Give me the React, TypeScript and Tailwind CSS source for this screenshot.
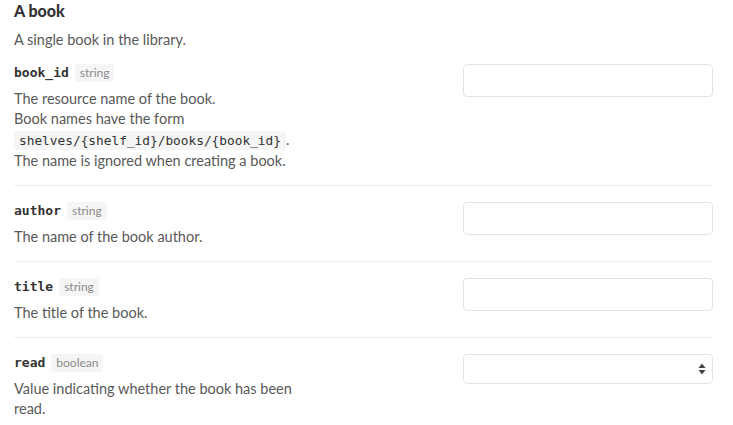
import React from "react";

type Field = {
  name: string;
  type: string;
  lines: React.ReactNode[];
  select?: boolean;
};

const fields: Field[] = [
  {
    name: "book_id",
    type: "string",
    lines: [
      "The resource name of the book.",
      "Book names have the form",
      <span key="code">
        <code className="rounded-[3px] bg-[#f5f5f5] px-[5px] py-[2px] font-['DejaVu_Sans_Mono',monospace] text-[12.8px] text-[#333]">
          {"shelves/{shelf_id}/books/{book_id}"}
        </code>
        .
      </span>,
      "The name is ignored when creating a book.",
    ],
  },
  { name: "author", type: "string", lines: ["The name of the book author."] },
  { name: "title", type: "string", lines: ["The title of the book."] },
  {
    name: "read",
    type: "boolean",
    lines: ["Value indicating whether the book has been read."],
    select: true,
  },
];

const SelectArrows = () => (
  <svg width="8" height="12" viewBox="0 0 8 12" className="text-[#444]">
    <path d="M4 0.5 L7.5 5 H0.5 Z" fill="currentColor" />
    <path d="M4 11.5 L7.5 7 H0.5 Z" fill="currentColor" />
  </svg>
);

const FieldRow = ({ field, first, last }: { field: Field; first: boolean; last: boolean }) => (
  <div
    className={`flex justify-between ${first ? "pt-[14px]" : "pt-4"} ${
      last ? "pb-2" : "pb-[14px] border-b border-[#ededed]"
    }`}
  >
    <div className="flex flex-col">
      <div className="flex h-[18px] items-center gap-[6px]">
        <span className="font-['DejaVu_Sans_Mono',monospace] text-[13px] font-bold text-[#333]">{field.name}</span>
        <span className="rounded-[3px] bg-[#f5f5f5] px-[5px] text-[12px] leading-[18px] text-[#8a8a8a]">
          {field.type}
        </span>
      </div>
      <div className="mt-[7px] w-[300px] text-[14.5px] leading-[20px] text-[#595959]">
        {field.lines.map((l, i) => (
          <div key={i} className={typeof l === "string" ? "" : "py-[1px] leading-[19px]"}>
            {l}
          </div>
        ))}
      </div>
    </div>
    {field.select ? (
      <div className="flex h-[30px] w-[250px] items-center justify-end rounded-[4px] border border-[#e3e3e3] bg-white pr-[6px]">
        <SelectArrows />
      </div>
    ) : (
      <div className="h-[33px] w-[250px] rounded-[4px] border border-[#e3e3e3] bg-white" />
    )}
  </div>
);

export default function App() {
  return (
    <div className="min-h-screen bg-white pl-[14px] pr-[20px] font-['Lato',sans-serif]">
      <h2 className="pt-[2px] text-[16px] font-black leading-[18px] text-[#333]">A book</h2>
      <p className="mt-[10px] text-[14.5px] leading-[20px] text-[#595959]">A single book in the library.</p>
      <div>
        {fields.map((f, i) => (
          <FieldRow key={f.name} field={f} first={i === 0} last={i === fields.length - 1} />
        ))}
      </div>
    </div>
  );
}
